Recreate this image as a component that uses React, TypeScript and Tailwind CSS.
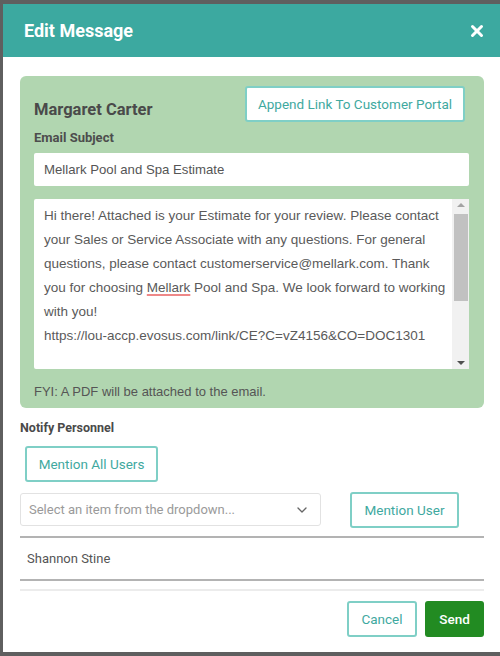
import { ChevronDown, X } from 'lucide-react';

const roboto = { fontFamily: 'Roboto, "Noto Sans", sans-serif' };
const arial = { fontFamily: '"Liberation Sans", Arial, sans-serif' };

function OutlineButton({ label, className }: { label: string; className?: string }) {
  return (
    <button
      className={`flex items-center justify-center bg-white border-2 border-[#7fcfc6] rounded-[3px] text-[#3fa99f] text-[13.5px] ${className ?? ''}`}
      style={roboto}
    >
      {label}
    </button>
  );
}

export default function App() {
  return (
    <div className="w-[500px] h-[656px] bg-[#5f5f5f] overflow-hidden">
      <div className="ml-[3px] mt-[4px] w-[497px] h-[648px] bg-white flex flex-col">
        {/* Header */}
        <div className="h-[53px] bg-[#3ca9a0] flex items-center justify-between pl-[21px] pr-[14px] shrink-0">
          <span className="text-white text-[18px] font-bold" style={roboto}>
            Edit Message
          </span>
          <X className="w-[18px] h-[18px] text-white" strokeWidth={4} />
        </div>

        <div className="pl-[17px] pr-[16px] pt-[19px] flex flex-col">
          {/* Message card */}
          <div className="bg-[#b1d6b0] rounded-[6px] pl-[14px] pr-[15px] pt-[10px] pb-[8px] h-[332px]">
            <div className="flex items-start justify-between">
              <div className="pt-[12px] text-[16.5px] font-bold text-[#4a4a4a]" style={roboto}>
                Margaret Carter
              </div>
              <OutlineButton label="Append Link To Customer Portal" className="w-[220px] h-[36px] mr-[4px]" />
            </div>
            <div className="mt-[5px] text-[13px] font-bold text-[#4d4d4d]" style={roboto}>
              Email Subject
            </div>
            <div
              className="mt-[6px] h-[33px] bg-white rounded-[2px] flex items-center pl-[10px] text-[13.2px] text-[#555]"
              style={arial}
            >
              Mellark Pool and Spa Estimate
            </div>
            <div className="mt-[13px] h-[170px] bg-white rounded-[2px] flex">
              <div className="flex-1 pl-[10px] pr-[6px] pt-[5px] text-[13.5px] leading-[24px] text-[#5a5a5a]" style={arial}>
                Hi there! Attached is your Estimate for your review. Please contact your Sales or Service Associate with
                any questions. For general questions, please contact customerservice@mellark.com. Thank you for
                choosing <span className="underline decoration-[#e88] decoration-2 underline-offset-2">Mellark</span>{' '}
                Pool and Spa. We look forward to working with you!
                <br />
                https://lou-accp.evosus.com/link/CE?C=vZ4156&amp;CO=DOC1301
              </div>
              <div className="w-[17px] bg-[#f1f1f1] flex flex-col items-center py-[4px]">
                <div className="w-0 h-0 border-x-[4px] border-x-transparent border-b-[4px] border-b-[#a3a3a3]" />
                <div className="mt-[7px] w-[14px] h-[87px] bg-[#c1c1c1]" />
                <div className="flex-1" />
                <div className="w-0 h-0 border-x-[4px] border-x-transparent border-t-[4px] border-t-[#505050]" />
              </div>
            </div>
            <div className="mt-[13px] text-[13px] text-[#555]" style={arial}>
              FYI: A PDF will be attached to the email.
            </div>
          </div>

          {/* Notify */}
          <div className="mt-[11px] text-[12.5px] font-bold text-[#4a4a4a]" style={roboto}>
            Notify Personnel
          </div>
          <OutlineButton label="Mention All Users" className="mt-[8px] ml-[5px] w-[133px] h-[36px]" />
          <div className="mt-[10px] flex items-center">
            <div
              className="w-[301px] h-[33px] border border-[#e2e2e2] rounded-[3px] flex items-center justify-between pl-[8px] pr-[10px] text-[13px] text-[#9a9a9a]"
              style={roboto}
            >
              <span>Select an item from the dropdown...</span>
              <ChevronDown className="w-[16px] h-[16px] text-[#666]" strokeWidth={2} />
            </div>
            <OutlineButton label="Mention User" className="ml-[29px] w-[109px] h-[36px]" />
          </div>
          <div className="mt-[8px] h-[2px] bg-[#b3b3b3]" />
          <div className="h-[41px] flex items-center pl-[7px] text-[13px] text-[#555]" style={roboto}>
            Shannon Stine
          </div>
          <div className="h-[2px] bg-[#b3b3b3]" />
          <div className="mt-[8px] h-[2px] bg-[#ececec]" />
          <div className="mt-[10px] flex justify-end gap-[8px]">
            <OutlineButton label="Cancel" className="w-[70px] h-[36px]" />
            <button
              className="w-[59px] h-[36px] bg-[#228b22] rounded-[3px] text-white text-[13.5px] font-medium"
              style={roboto}
            >
              Send
            </button>
          </div>
        </div>
      </div>
    </div>
  );
}
